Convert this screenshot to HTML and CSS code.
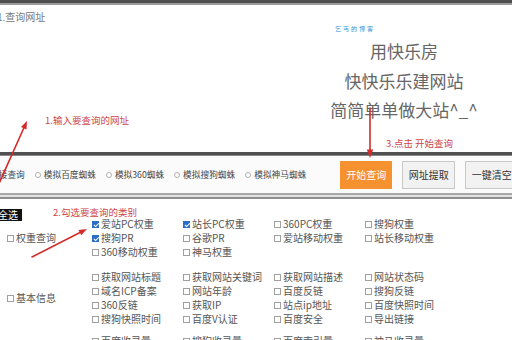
FILE: index.html
```html
<!DOCTYPE html>
<html>
<head>
<meta charset="utf-8">
<link rel="stylesheet" href="styles.css">
</head>
<body>
<div class="page">
  <div class="topbar"></div>
  <header class="head">
    <div class="head-left">1.查询网址</div>
    <div class="blog">
      <div class="blog-tag">乞丐的博客</div>
      <div class="slogan">用快乐房</div>
      <div class="slogan">快快乐乐建网站</div>
      <div class="slogan">简简单单做大站^_^</div>
    </div>
  </header>
  <div class="bar-dark"></div>
  <div class="toolbar">
    <label class="radio"><span class="dot"></span>直接查询</label>
    <label class="radio"><span class="dot"></span>模拟百度蜘蛛</label>
    <label class="radio"><span class="dot"></span>模拟360蜘蛛</label>
    <label class="radio"><span class="dot"></span>模拟搜狗蜘蛛</label>
    <label class="radio"><span class="dot"></span>模拟神马蜘蛛</label>
    <div class="buttons">
      <button class="btn btn-primary">开始查询</button>
      <button class="btn">网址提取</button>
      <button class="btn">一键清空</button>
    </div>
  </div>
  <div class="bar-light"></div>
  <section class="options">
    <div class="select-all">全选</div>
    <div class="group group-first">
      <div class="group-label"><span class="cb"></span>权重查询</div>
      <div class="group-items">
        <span class="opt"><span class="cb on"></span>爱站PC权重</span>
        <span class="opt"><span class="cb on"></span>站长PC权重</span>
        <span class="opt"><span class="cb"></span>360PC权重</span>
        <span class="opt"><span class="cb"></span>搜狗权重</span>
        <span class="opt"><span class="cb on"></span>搜狗PR</span>
        <span class="opt"><span class="cb"></span>谷歌PR</span>
        <span class="opt"><span class="cb"></span>爱站移动权重</span>
        <span class="opt"><span class="cb"></span>站长移动权重</span>
        <span class="opt"><span class="cb"></span>360移动权重</span>
        <span class="opt"><span class="cb"></span>神马权重</span>
      </div>
    </div>
    <div class="group group-second">
      <div class="group-label"><span class="cb"></span>基本信息</div>
      <div class="group-items">
        <span class="opt"><span class="cb"></span>获取网站标题</span>
        <span class="opt"><span class="cb"></span>获取网站关键词</span>
        <span class="opt"><span class="cb"></span>获取网站描述</span>
        <span class="opt"><span class="cb"></span>网站状态码</span>
        <span class="opt"><span class="cb"></span>域名ICP备案</span>
        <span class="opt"><span class="cb"></span>网站年龄</span>
        <span class="opt"><span class="cb"></span>百度反链</span>
        <span class="opt"><span class="cb"></span>搜狗反链</span>
        <span class="opt"><span class="cb"></span>360反链</span>
        <span class="opt"><span class="cb"></span>获取IP</span>
        <span class="opt"><span class="cb"></span>站点ip地址</span>
        <span class="opt"><span class="cb"></span>百度快照时间</span>
        <span class="opt"><span class="cb"></span>搜狗快照时间</span>
        <span class="opt"><span class="cb"></span>百度V认证</span>
        <span class="opt"><span class="cb"></span>百度安全</span>
        <span class="opt"><span class="cb"></span>导出链接</span>
      </div>
    </div>
    <div class="group group-third">
      <div class="group-label"><span class="cb"></span>收录信息</div>
      <div class="group-items">
        <span class="opt"><span class="cb"></span>百度收录量</span>
        <span class="opt"><span class="cb"></span>搜狗收录量</span>
        <span class="opt"><span class="cb"></span>百度索引量</span>
        <span class="opt"><span class="cb"></span>神马收录量</span>
        <span class="opt"><span class="cb"></span>360收录量</span>
        <span class="opt"><span class="cb"></span>谷歌收录量</span>
        <span class="opt"><span class="cb"></span>百度流量</span>
        <span class="opt"><span class="cb"></span>移动流量</span>
      </div>
    </div>
  </section>

  <div class="note note-1">1.输入要查询的网址</div>
  <div class="note note-2">2.勾选要查询的类别</div>
  <div class="note note-3">3.点击 开始查询</div>
  <svg class="arrows" width="512" height="340" viewBox="0 0 512 340">
    <g stroke="#d42a2a" stroke-width="1.6" fill="none" stroke-linecap="round">
      <line x1="-3" y1="188" x2="24.5" y2="126.5"/>
      <line x1="370" y1="108" x2="370" y2="151"/>
      <line x1="32" y1="257" x2="81" y2="232"/>
    </g>
    <g fill="#d42a2a">
      <polygon points="27,121 26.5,129.5 21,127.1"/>
      <polygon points="370,158 366.8,149.5 373.2,149.5"/>
      <polygon points="87,229 81.2,235.3 78.5,230"/>
    </g>
  </svg>
</div>
</body>
</html>
```
FILE: styles.css
```css
* { box-sizing: border-box; }
html, body { margin: 0; padding: 0; }
body {
  width: 512px;
  height: 340px;
  overflow: hidden;
  background: #fff;
  font-family: "Noto Sans CJK SC", "Noto Sans", sans-serif;
}
.page {
  position: relative;
  width: 512px;
  height: 340px;
  overflow: hidden;
}
.topbar {
  height: 5px;
  background: #4e4e4e;
  border-bottom: 2px solid #9c9c9c;
}
.head {
  height: 147px;
  display: flex;
  justify-content: space-between;
}
.head-left {
  margin-left: -3px;
  padding-top: 5px;
  font-size: 10px;
  line-height: 14px;
  color: #777;
  white-space: nowrap;
}
.blog {
  width: 216px;
  padding-top: 20px;
  text-align: center;
}
.blog-tag {
  text-align: left;
  padding-left: 39px;
  font-size: 6px;
  line-height: 8px;
  letter-spacing: 2px;
  color: #2f8fd8;
  margin-bottom: 3px;
}
.slogan {
  font-size: 17px;
  line-height: 29.5px;
  color: #666;
  white-space: nowrap;
}
.bar-dark {
  height: 4px;
  background: #505050;
  border-bottom: 1px solid #8a8a8a;
}
.toolbar {
  height: 37px;
  display: flex;
  align-items: center;
  gap: 10px;
  margin-left: -19px;
  background: #fbfbfb;
  white-space: nowrap;
}
.radio {
  display: flex;
  align-items: center;
  font-size: 8.7px;
  color: #444;
  flex-shrink: 0;
}
.dot {
  width: 6px;
  height: 6px;
  border: 1px solid #b0b0b0;
  border-radius: 50%;
  margin-right: 3px;
  background: #fff;
}
.buttons {
  display: flex;
  gap: 10px;
  margin-left: 24px;
  flex-shrink: 0;
}
.btn {
  height: 28px;
  width: 53px;
  padding: 0;
  font-family: inherit;
  font-size: 10px;
  border: 1px solid #c8c8c8;
  background: #f2f2f2;
  color: #333;
  flex-shrink: 0;
}
.btn-primary {
  background: #f5922f;
  border-color: #f5922f;
  color: #fff;
  width: 52px;
}
.bar-light {
  height: 6px;
  border-top: 2px solid #a8a8a8;
  border-bottom: 2px solid #8e8e8e;
  background: #e2e2e2;
}
.options {
  padding-top: 10px;
}
.select-all {
  width: fit-content;
  margin-left: -2px;
  padding-right: 4px;
  background: #111;
  color: #fff;
  font-size: 10px;
  line-height: 12px;
  height: 12px;
  white-space: nowrap;
}
.group {
  display: flex;
  align-items: center;
}
.group-first {
  margin-top: -4px;
}
.group-second {
  margin-top: 11px;
}
.group-third {
  margin-top: 8px;
}
.group-label {
  width: 92px;
  flex-shrink: 0;
  padding-left: 7px;
  display: flex;
  align-items: center;
  font-size: 10px;
  line-height: 14px;
  color: #555;
  white-space: nowrap;
}
.group-items {
  display: grid;
  grid-template-columns: repeat(4, 91px);
}
.opt {
  display: flex;
  align-items: center;
  font-size: 10px;
  line-height: 14px;
  height: 14px;
  color: #555;
  white-space: nowrap;
}
.cb {
  position: relative;
  width: 7px;
  height: 7px;
  border: 1px solid #a0a0a0;
  background: #fff;
  margin-right: 2px;
  flex-shrink: 0;
}
.cb.on {
  background: #2a6cc8;
  border-color: #2a6cc8;
}
.cb.on::after {
  content: "";
  position: absolute;
  left: 1.5px;
  top: 0px;
  width: 2px;
  height: 3.5px;
  border-right: 1px solid #fff;
  border-bottom: 1px solid #fff;
  transform: rotate(45deg);
}
.note {
  position: absolute;
  font-size: 9.5px;
  line-height: 12px;
  color: #cf4646;
  white-space: nowrap;
}
.note-1 { left: 45px; top: 114px; }
.note-2 { left: 53px; top: 206px; }
.note-3 { left: 386px; top: 137px; }
.arrows {
  position: absolute;
  left: 0;
  top: 0;
  pointer-events: none;
}
```
